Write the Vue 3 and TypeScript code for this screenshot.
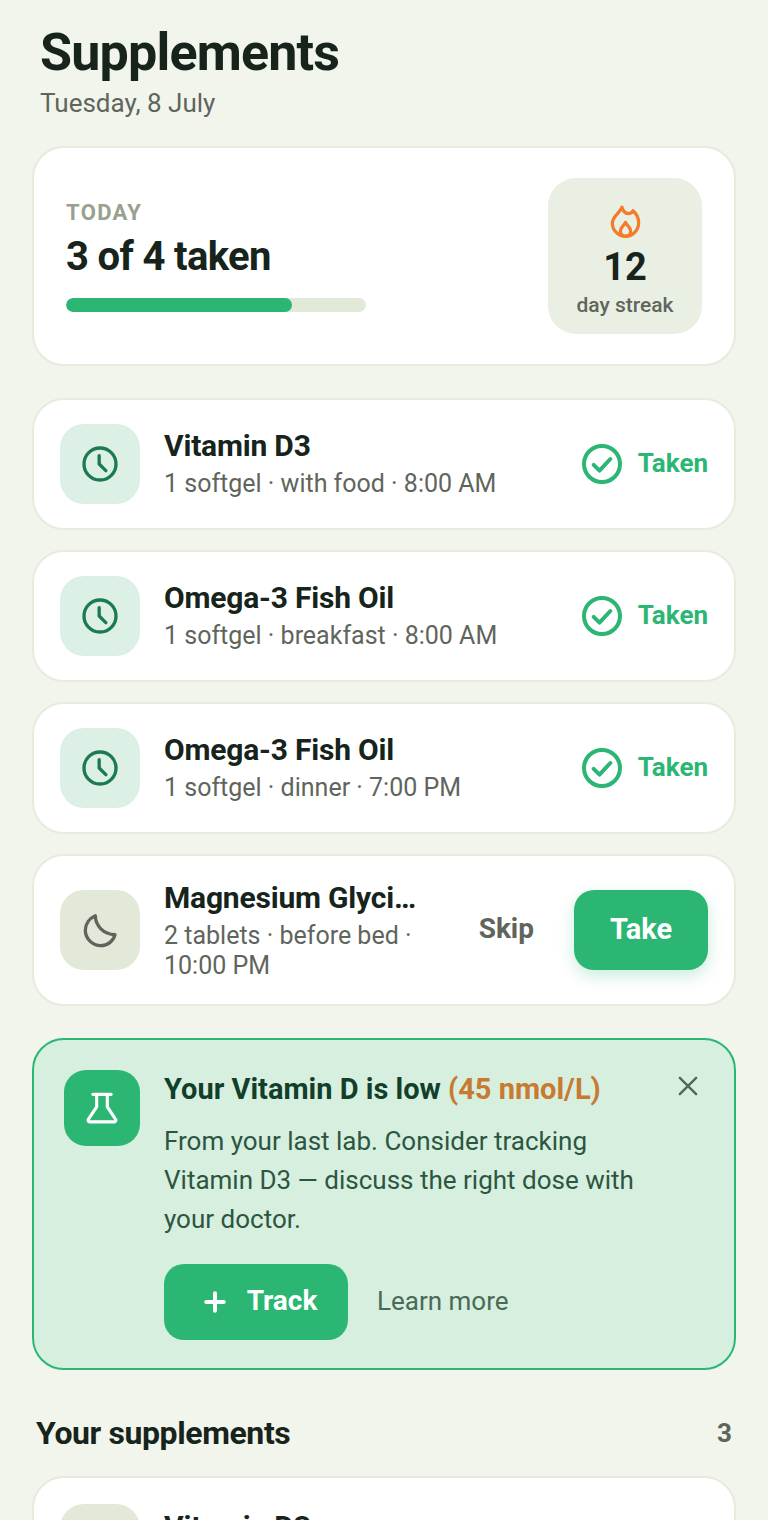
<script setup lang="ts">
interface Dose {
  name: string;
  detail: string;
}

const taken: Dose[] = [
  { name: 'Vitamin D3', detail: '1 softgel · with food · 8:00 AM' },
  { name: 'Omega-3 Fish Oil', detail: '1 softgel · breakfast · 8:00 AM' },
  { name: 'Omega-3 Fish Oil', detail: '1 softgel · dinner · 7:00 PM' },
];
</script>

<template>
  <div class="page">
    <header class="head">
      <h1>Supplements</h1>
      <p>Tuesday, 8 July</p>
    </header>

    <section class="card summary">
      <div class="summary-main">
        <div class="eyebrow">TODAY</div>
        <div class="count">3 of 4 taken</div>
        <div class="track"><div class="fill" :style="{ width: '75.4%' }"></div></div>
      </div>
      <div class="streak">
        <svg width="41" height="41" viewBox="0 0 24 24" fill="none" stroke="#f47b2a" stroke-width="1.900" stroke-linecap="round" stroke-linejoin="round">
          <path d="M10 3.600c-.1 0 .8 3.700 3.600 3.800 1.300 0 2.300-.8 2.800-1.700 2 1.700 3.300 4.300 3.300 7 0 4.400-3.500 8-7.700 8S4.300 17.100 4.300 13c0-4 4.200-5.700 5.700-9.400z" />
          <path d="M12 12.500c.7 1.800 3 2.700 3 5.100 0 1.700-1.300 3-3 3s-3-1.300-3-3c0-2.400 2.300-3.300 3-5.100z" />
        </svg>
        <div class="streak-num">12</div>
        <div class="streak-label">day streak</div>
      </div>
    </section>

    <div class="list">
      <article v-for="(dose, i) in taken" :key="i" class="card item">
        <div class="icon-box mint">
          <svg width="40" height="40" viewBox="0 0 24 24" fill="none" stroke="#1a7a50" stroke-width="2" stroke-linecap="round" stroke-linejoin="round">
            <circle cx="12" cy="12" r="9.600" />
            <path d="M11.500 7v5l4 4" />
          </svg>
        </div>
        <div class="item-text single">
          <div class="name">{{ dose.name }}</div>
          <div class="detail">{{ dose.detail }}</div>
        </div>
        <div class="taken">
          <svg width="40" height="40" viewBox="0 0 24 24" fill="none" stroke="#2bb673" stroke-width="2.400" stroke-linecap="round" stroke-linejoin="round">
            <circle cx="12" cy="12" r="10.800" />
            <path d="M7 12.500l3.500 3.500 6.500-7" />
          </svg>
          <span>Taken</span>
        </div>
      </article>

      <article class="card item">
        <div class="icon-box sage">
          <svg width="40" height="40" viewBox="0 0 24 24" fill="none" stroke="#5f655c" stroke-width="2" stroke-linecap="round" stroke-linejoin="round">
            <path d="M9.200 3.500C9.300 9.500 14 14.500 21 14.800 20 18.800 16.500 21.400 12.500 21.400 7.500 21.400 3.200 17.200 3.200 12.200 3.200 8.300 5.800 5 9.200 3.500z" />
          </svg>
        </div>
        <div class="item-text">
          <div class="name">Magnesium Glycinate</div>
          <div class="detail">2 tablets · before bed · 10:00 PM</div>
        </div>
        <div class="actions">
          <button class="skip">Skip</button>
          <button class="take">Take</button>
        </div>
      </article>
    </div>

    <section class="banner">
      <div class="banner-icon">
        <svg width="40" height="40" viewBox="0 0 24 24" fill="none" stroke="#fff" stroke-width="1.900" stroke-linecap="round" stroke-linejoin="round">
          <path d="M6.500 3.800h11M8.800 3.800v7.500L3.800 18.800a1 1 0 0 0 .8 1.500h14.800a1 1 0 0 0 .8-1.500l-5-7.500V3.800" />
        </svg>
      </div>
      <div class="banner-body">
        <h2>Your Vitamin D is low <span>(45 nmol/L)</span></h2>
        <p>From your last lab. Consider tracking Vitamin D3 — discuss the right dose with your doctor.</p>
        <div class="banner-actions">
          <button class="track-btn">
            <svg width="28" height="28" viewBox="0 0 24 24" fill="none" stroke="#fff" stroke-width="3.400" stroke-linecap="round">
              <path d="M12 4.500v15M4.500 12h15" />
            </svg>
            <span>Track</span>
          </button>
          <span class="learn">Learn more</span>
        </div>
      </div>
      <button class="close" aria-label="Dismiss">
        <svg width="28" height="28" viewBox="0 0 24 24" fill="none" stroke="#4a6a58" stroke-width="2" stroke-linecap="round">
          <path d="M5 5l14 14M19 5L5 19" />
        </svg>
      </button>
    </section>

    <div class="section-head">
      <h3>Your supplements</h3>
      <span>3</span>
    </div>

    <article class="card item library">
      <div class="icon-box sage"></div>
      <div class="item-text">
        <div class="name">Vitamin D3</div>
        <div class="detail">1 softgel · with food</div>
      </div>
      <div class="rate">300</div>
    </article>
  </div>
</template>

<style>
html,
body {
  background: #f2f5ec;
}
</style>

<style scoped>
.page {
  height: 1520px;
  overflow: hidden;
  padding: 0 32px;
  box-sizing: border-box;
  background: #f2f5ec;
  font-family: Roboto, "Liberation Sans", sans-serif;
  color: #16241c;
}

.head {
  padding: 23px 8px 0;
}

.head h1 {
  margin: 0;
  font-size: 52px;
  line-height: 60px;
  font-weight: 700;
  letter-spacing: -0.8px;
}

.head p {
  margin: 2px 0 0;
  font-size: 26px;
  line-height: 36px;
  color: #5f655c;
}

.card {
  background: #fff;
  border: 2px solid #e6ebdd;
  border-radius: 32px;
  box-sizing: border-box;
}

.summary {
  margin-top: 25px;
  height: 220px;
  padding: 30px 32px;
  display: flex;
  align-items: center;
  justify-content: space-between;
}

.summary-main {
  padding-bottom: 2px;
}

.eyebrow {
  font-size: 22px;
  line-height: 28px;
  font-weight: 700;
  letter-spacing: 1.320px;
  color: #98a18e;
}

.count {
  margin-top: 5px;
  font-size: 40px;
  line-height: 50px;
  font-weight: 700;
  letter-spacing: -0.65px;
}

.track {
  margin-top: 16px;
  width: 300px;
  height: 14px;
  border-radius: 7px;
  background: #e2e9d9;
  overflow: hidden;
}

.fill {
  height: 100%;
  border-radius: 7px;
  background: #2bb673;
}

.streak {
  width: 154px;
  height: 156px;
  padding-top: 8px;
  box-sizing: border-box;
  border-radius: 28px;
  background: #e9efe3;
  display: flex;
  flex-direction: column;
  align-items: center;
  justify-content: center;
}

.streak-num {
  margin-top: 3px;
  font-size: 38px;
  line-height: 44px;
  font-weight: 700;
}

.streak-label {
  margin-top: 2px;
  font-size: 21px;
  line-height: 28px;
  font-weight: 500;
  color: #5f655c;
}

.list {
  margin-top: 32px;
  display: flex;
  flex-direction: column;
  gap: 20px;
}

.item {
  min-height: 132px;
  padding: 24px 26px;
  display: flex;
  align-items: center;
  gap: 24px;
}

.icon-box {
  flex: none;
  width: 80px;
  height: 80px;
  border-radius: 24px;
  display: flex;
  align-items: center;
  justify-content: center;
}

.mint {
  background: #ddf0e5;
}

.sage {
  background: #e2e9d9;
}

.item-text {
  flex: 1;
  min-width: 0;
}

.item-text.single {
  padding-bottom: 2px;
}

.name {
  font-size: 30px;
  line-height: 36px;
  font-weight: 700;
  letter-spacing: -0.2px;
  white-space: nowrap;
  overflow: hidden;
  text-overflow: ellipsis;
}

.detail {
  margin-top: 5px;
  font-size: 25px;
  line-height: 29.500px;
  color: #5f655c;
}

.taken {
  flex: none;
  display: flex;
  align-items: center;
  gap: 16px;
  font-size: 26px;
  font-weight: 700;
  color: #2bb673;
}

.taken span {
  padding-bottom: 2px;
}

.actions {
  flex: none;
  padding-left: 8px;
  display: flex;
  align-items: center;
  gap: 20px;
}

button {
  border: 0;
  font-family: inherit;
  font-weight: 700;
  cursor: pointer;
}

.skip {
  background: none;
  padding: 0 20px 3px;
  font-size: 28px;
  color: #5f655c;
}

.take {
  width: 134px;
  height: 80px;
  padding: 0 0 2px;
  border-radius: 20px;
  background: #2bb673;
  color: #fff;
  font-size: 29px;
  box-shadow: 0 6px 16px rgba(43, 182, 115, 0.25);
}

.banner {
  position: relative;
  margin-top: 32px;
  height: 332px;
  box-sizing: border-box;
  padding: 30px;
  display: flex;
  gap: 24px;
  background: #d7efdf;
  border: 2px solid #2bb673;
  border-radius: 32px;
}

.banner-icon {
  flex: none;
  width: 76px;
  height: 76px;
  border-radius: 22px;
  background: #2bb673;
  display: flex;
  align-items: center;
  justify-content: center;
}

.banner-body {
  flex: 1;
  min-width: 0;
}

.banner-body h2 {
  margin: 0;
  font-size: 29px;
  line-height: 38px;
  font-weight: 700;
  color: #123f2b;
}

.banner-body h2 span {
  color: #c87a30;
}

.banner-body p {
  margin: 14px 0 0;
  max-width: 500px;
  font-size: 26px;
  line-height: 39px;
  color: #2c5642;
}

.banner-actions {
  margin-top: 25px;
  display: flex;
  align-items: center;
  gap: 29px;
}

.track-btn {
  width: 184px;
  height: 76px;
  padding: 0 0 0 6px;
  border-radius: 20px;
  background: #2bb673;
  color: #fff;
  font-size: 28px;
  display: flex;
  align-items: center;
  justify-content: center;
  gap: 18px;
}

.track-btn span {
  padding-bottom: 3px;
}

.learn {
  padding-bottom: 2px;
  font-size: 26px;
  color: #4a6a58;
}

.close {
  position: absolute;
  top: 32px;
  right: 32px;
  padding: 0;
  background: none;
  display: flex;
}

.section-head {
  margin-top: 44px;
  padding: 0 4px;
  display: flex;
  align-items: center;
  justify-content: space-between;
}

.section-head h3 {
  margin: 0;
  font-size: 32px;
  line-height: 38px;
  font-weight: 700;
  letter-spacing: -0.4px;
}

.section-head span {
  font-size: 26px;
  font-weight: 700;
  color: #5f655c;
}

.section-head + .item {
  margin-top: 24px;
}

.library {
  min-height: 136px;
  padding: 26px;
}

.rate {
  flex: none;
  align-self: flex-start;
  margin: 14px 80px 0 0;
  font-size: 27px;
  line-height: 28px;
  font-weight: 700;
  color: #2bb673;
}
</style>
